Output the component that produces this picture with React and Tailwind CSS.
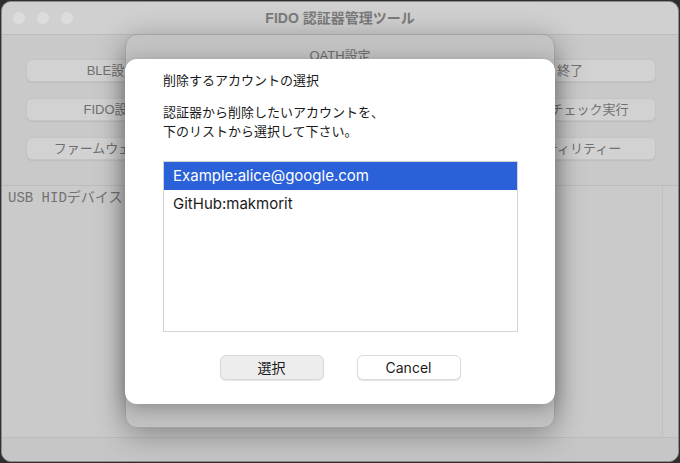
import React from 'react';

const sans = "font-['Liberation_Sans','Noto_Sans_CJK_JP',sans-serif]";
const ui = "font-['Inter','Noto_Sans_CJK_JP',sans-serif]";

function MainButton({ label }) {
  return (
    <div className="h-[23px] rounded-[6px] bg-[#d2d2d2] border border-[#c4c4c4] shadow-[0_1px_1px_rgba(0,0,0,0.06)] flex items-center justify-center text-[13px] text-[#707070]">
      {label}
    </div>
  );
}

export default function App() {
  const rows = [
    ['BLE設定', 'USB設定', '終了'],
    ['FIDO設定', 'PIN番号設定', 'ヘルスチェック実行'],
    ['ファームウェア更新', 'OATH設定', 'ユーティリティー'],
  ];
  const accounts = ['Example:alice@google.com', 'GitHub:makmorit'];

  return (
    <div className={`w-[680px] h-[463px] bg-[#2f2f2f] p-[1px] relative ${sans}`}>
      <div className="relative h-full rounded-[10px] bg-[#c9c9c9] overflow-hidden flex flex-col border border-[#8c8c8c]">
        {/* title bar */}
        <div className="h-[33px] shrink-0 flex items-center relative bg-[#d0d0d0] border-b border-[#bdbdbd]">
          <div className="flex gap-[12px] pl-[11px]">
            <span className="w-[12px] h-[12px] rounded-full bg-[#dcdcdc]" />
            <span className="w-[12px] h-[12px] rounded-full bg-[#dcdcdc]" />
            <span className="w-[12px] h-[12px] rounded-full bg-[#dcdcdc]" />
          </div>
          <div className="absolute inset-0 flex items-center justify-center text-[14px] font-bold text-[#7b7b7b]">
            FIDO 認証器管理ツール
          </div>
        </div>

        {/* buttons */}
        <div className="pt-[24px] pb-[25px] pl-[24px] pr-[22px] grid grid-cols-3 gap-x-[57px] gap-y-[16px] shrink-0">
          {rows.flat().map((l) => (
            <MainButton key={l} label={l} />
          ))}
        </div>

        {/* log area */}
        <div className="flex-1 flex border-t border-[#bcbcbc] bg-[#cacaca]">
          <div className="flex-1 pl-[6px] pt-[2px] text-[14px] text-[#727272] font-['Liberation_Mono','Noto_Sans_CJK_JP',monospace]">
            USB HIDデバイス
          </div>
          <div className="w-[16px] border-l border-[#c0c0c0] bg-[#cbcbcb]" />
        </div>
        <div className="h-[24px] shrink-0 border-t border-[#bcbcbc] bg-[#c6c6c6]" />
      </div>

      {/* OATH sheet */}
      <div className="absolute left-[125px] top-[34px] w-[430px] h-[394px] rounded-[12px] bg-[#c3c3c3] border border-[#a3a3a3] shadow-[0_6px_30px_rgba(0,0,0,0.35)]">
        <div className="text-center text-[13px] text-[#6c6c6c] pt-[11px]">OATH設定</div>
      </div>

      {/* dialog */}
      <div className={`absolute left-[125px] top-[59px] w-[430px] h-[345px] rounded-[12px] bg-white shadow-[0_4px_20px_rgba(0,0,0,0.3)] flex flex-col pl-[38px] pr-[37px] ${ui}`}>
        <div className="pt-[12px] text-[13px] text-[#1a1a1a] leading-[19px]">削除するアカウントの選択</div>
        <div className="pt-[13px] text-[13px] text-[#1a1a1a] leading-[19px]">
          <div>認証器から削除したいアカウントを、</div>
          <div>下のリストから選択して下さい。</div>
        </div>
        <div className="mt-[20px] h-[171px] border border-[#d3d3d3] flex flex-col">
          {accounts.map((a, i) => (
            <div
              key={a}
              className={`h-[28px] flex items-center pl-[9px] text-[15px] ${i === 0 ? 'bg-[#2a61d8] text-white' : 'text-[#1a1a1a]'}`}
            >
              {a}
            </div>
          ))}
        </div>
        <div className="mt-[23px] flex justify-center gap-[33px] pr-[1px]">
          <button className="w-[104px] h-[25px] rounded-[6px] bg-[#ededed] border border-[#d8d8d8] shadow-[0_1px_1px_rgba(0,0,0,0.1)] text-[14px] text-[#1a1a1a]">
            選択
          </button>
          <button className="w-[104px] h-[25px] rounded-[6px] bg-white border border-[#dadada] shadow-[0_1px_1px_rgba(0,0,0,0.12)] text-[14px] text-[#1a1a1a]">
            Cancel
          </button>
        </div>
      </div>
    </div>
  );
}
